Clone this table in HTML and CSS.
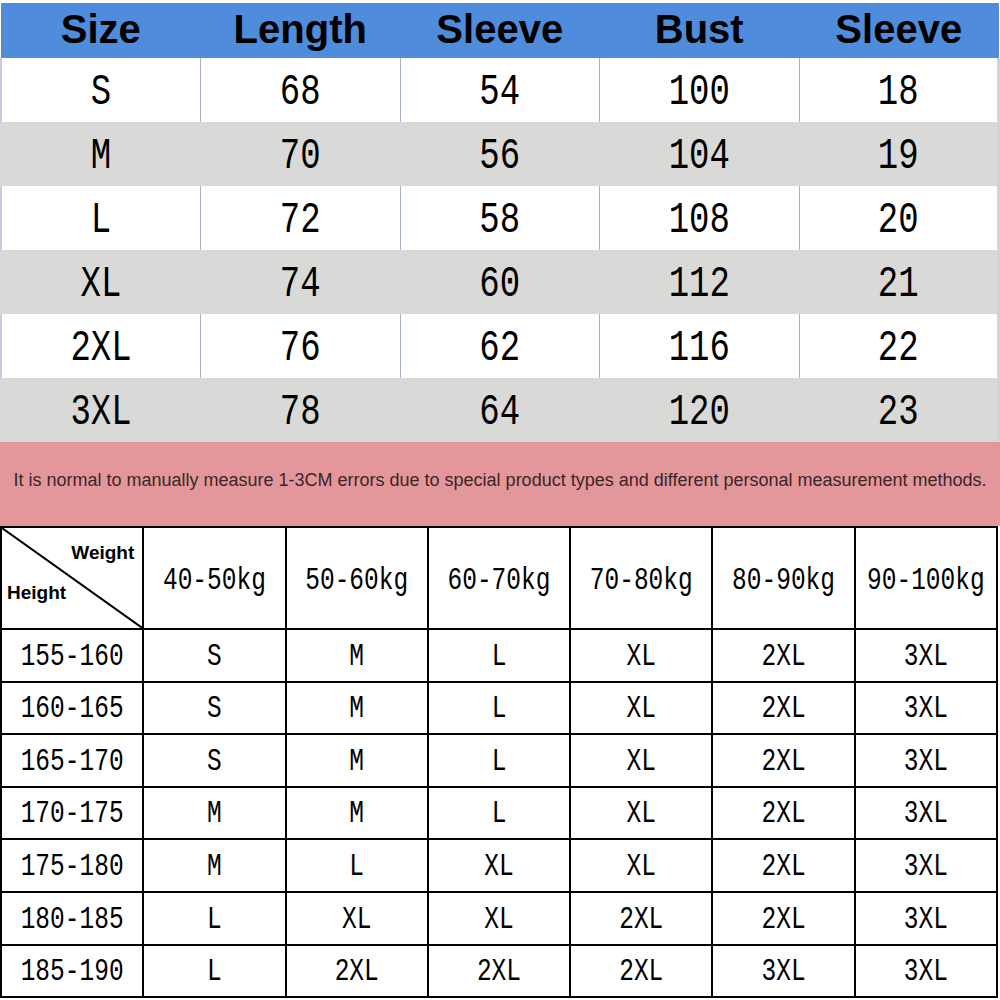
FILE: index.html
```html
<!DOCTYPE html>
<html>
<head>
<meta charset="utf-8">
<link rel="stylesheet" href="styles.css">
</head>
<body>
<div class="page">
  <table class="size">
    <thead>
      <tr><th>Size</th><th>Length</th><th>Sleeve</th><th>Bust</th><th>Sleeve</th></tr>
    </thead>
    <tbody>
      <tr><td><span class="g">S</span></td><td><span class="g">68</span></td><td><span class="g">54</span></td><td><span class="g">100</span></td><td><span class="g">18</span></td></tr>
      <tr class="alt"><td><span class="g">M</span></td><td><span class="g">70</span></td><td><span class="g">56</span></td><td><span class="g">104</span></td><td><span class="g">19</span></td></tr>
      <tr><td><span class="g">L</span></td><td><span class="g">72</span></td><td><span class="g">58</span></td><td><span class="g">108</span></td><td><span class="g">20</span></td></tr>
      <tr class="alt"><td><span class="g">XL</span></td><td><span class="g">74</span></td><td><span class="g">60</span></td><td><span class="g">112</span></td><td><span class="g">21</span></td></tr>
      <tr><td><span class="g">2XL</span></td><td><span class="g">76</span></td><td><span class="g">62</span></td><td><span class="g">116</span></td><td><span class="g">22</span></td></tr>
      <tr class="alt"><td><span class="g">3XL</span></td><td><span class="g">78</span></td><td><span class="g">64</span></td><td><span class="g">120</span></td><td><span class="g">23</span></td></tr>
    </tbody>
  </table>

  <div class="note">It is normal to manually measure 1-3CM errors due to special product types and different personal measurement methods.</div>

  <table class="fit">
    <thead>
      <tr>
        <th class="corner">
          <svg class="diag" viewBox="0 0 143 102" preserveAspectRatio="none"><line x1="0" y1="0" x2="143" y2="102" stroke="#000" stroke-width="2"/></svg>
          <span class="w">Weight</span>
          <span class="h">Height</span>
        </th>
        <th><span class="s">40-50kg</span></th>
        <th><span class="s">50-60kg</span></th>
        <th><span class="s">60-70kg</span></th>
        <th><span class="s">70-80kg</span></th>
        <th><span class="s">80-90kg</span></th>
        <th><span class="s">90-100kg</span></th>
      </tr>
    </thead>
    <tbody>
      <tr><td><span class="s">155-160</span></td><td><span class="s">S</span></td><td><span class="s">M</span></td><td><span class="s">L</span></td><td><span class="s">XL</span></td><td><span class="s">2XL</span></td><td><span class="s">3XL</span></td></tr>
      <tr><td><span class="s">160-165</span></td><td><span class="s">S</span></td><td><span class="s">M</span></td><td><span class="s">L</span></td><td><span class="s">XL</span></td><td><span class="s">2XL</span></td><td><span class="s">3XL</span></td></tr>
      <tr><td><span class="s">165-170</span></td><td><span class="s">S</span></td><td><span class="s">M</span></td><td><span class="s">L</span></td><td><span class="s">XL</span></td><td><span class="s">2XL</span></td><td><span class="s">3XL</span></td></tr>
      <tr><td><span class="s">170-175</span></td><td><span class="s">M</span></td><td><span class="s">M</span></td><td><span class="s">L</span></td><td><span class="s">XL</span></td><td><span class="s">2XL</span></td><td><span class="s">3XL</span></td></tr>
      <tr><td><span class="s">175-180</span></td><td><span class="s">M</span></td><td><span class="s">L</span></td><td><span class="s">XL</span></td><td><span class="s">XL</span></td><td><span class="s">2XL</span></td><td><span class="s">3XL</span></td></tr>
      <tr><td><span class="s">180-185</span></td><td><span class="s">L</span></td><td><span class="s">XL</span></td><td><span class="s">XL</span></td><td><span class="s">2XL</span></td><td><span class="s">2XL</span></td><td><span class="s">3XL</span></td></tr>
      <tr><td><span class="s">185-190</span></td><td><span class="s">L</span></td><td><span class="s">2XL</span></td><td><span class="s">2XL</span></td><td><span class="s">2XL</span></td><td><span class="s">3XL</span></td><td><span class="s">3XL</span></td></tr>
    </tbody>
  </table>
</div>
</body>
</html>
```
FILE: styles.css
```css
html, body {
  margin: 0;
  padding: 0;
  background: #ffffff;
}
.page {
  width: 1000px;
  height: 1000px;
  padding-top: 3px;
  box-sizing: border-box;
  overflow: hidden;
}
table {
  border-collapse: collapse;
  table-layout: fixed;
}
.size {
  width: 1000px;
}
.size th {
  height: 55px;
  padding: 0 0 3px 0;
  background: #4f8cdb;
  font-family: "Liberation Sans", Arial, sans-serif;
  font-weight: bold;
  font-size: 40px;
  color: #000;
  text-align: center;
  vertical-align: middle;
  box-sizing: border-box;
}
.size td {
  height: 64px;
  padding: 0;
  text-align: center;
  vertical-align: middle;
  border-left: 1px solid #a4b0c8;
  box-sizing: border-box;
}
.size td:first-child {
  border-left: 2px solid #c4cde0;
}
.size td:last-child {
  border-right: 3px solid #d3d3d3;
}
.size tr.alt td {
  background: #d9d9d7;
  border-left-color: #d9d9d7;
}
.g {
  display: inline-block;
  font-family: "Liberation Mono", "Courier New", monospace;
  font-size: 34px;
  color: #000;
  transform: scaleY(1.3);
  line-height: 1;
  margin-top: 3px;
}
.note {
  height: 84px;
  background: #e4979a;
  display: flex;
  align-items: center;
  justify-content: center;
  font-family: "Liberation Sans", Arial, sans-serif;
  font-size: 18px;
  color: #3b2528;
  white-space: nowrap;
  padding-bottom: 7px;
  box-sizing: border-box;
}
.fit {
  width: 998px;
  border: 2px solid #000;
}
.fit th, .fit td {
  border: 2px solid #000;
  padding: 0;
  text-align: center;
  vertical-align: middle;
  box-sizing: border-box;
}
.fit th {
  height: 102px;
  font-weight: normal;
}
.fit td {
  height: 52.6px;
}
.s {
  display: inline-block;
  font-family: "Liberation Mono", "Courier New", monospace;
  font-size: 24.5px;
  color: #000;
  transform: scaleY(1.3);
  line-height: 1;
  margin-top: 3px;
}
.fit th .s {
  margin-top: 7px;
}
.corner {
  position: relative;
  text-align: left;
}
.diag {
  position: absolute;
  left: 0;
  top: 0;
  width: 100%;
  height: 100%;
}
.corner .w, .corner .h {
  position: absolute;
  font-family: "Liberation Sans", Arial, sans-serif;
  font-weight: bold;
  font-size: 19px;
  color: #000;
}
.corner .w {
  right: 8px;
  top: 14px;
}
.corner .h {
  left: 5px;
  top: 54px;
}
```
